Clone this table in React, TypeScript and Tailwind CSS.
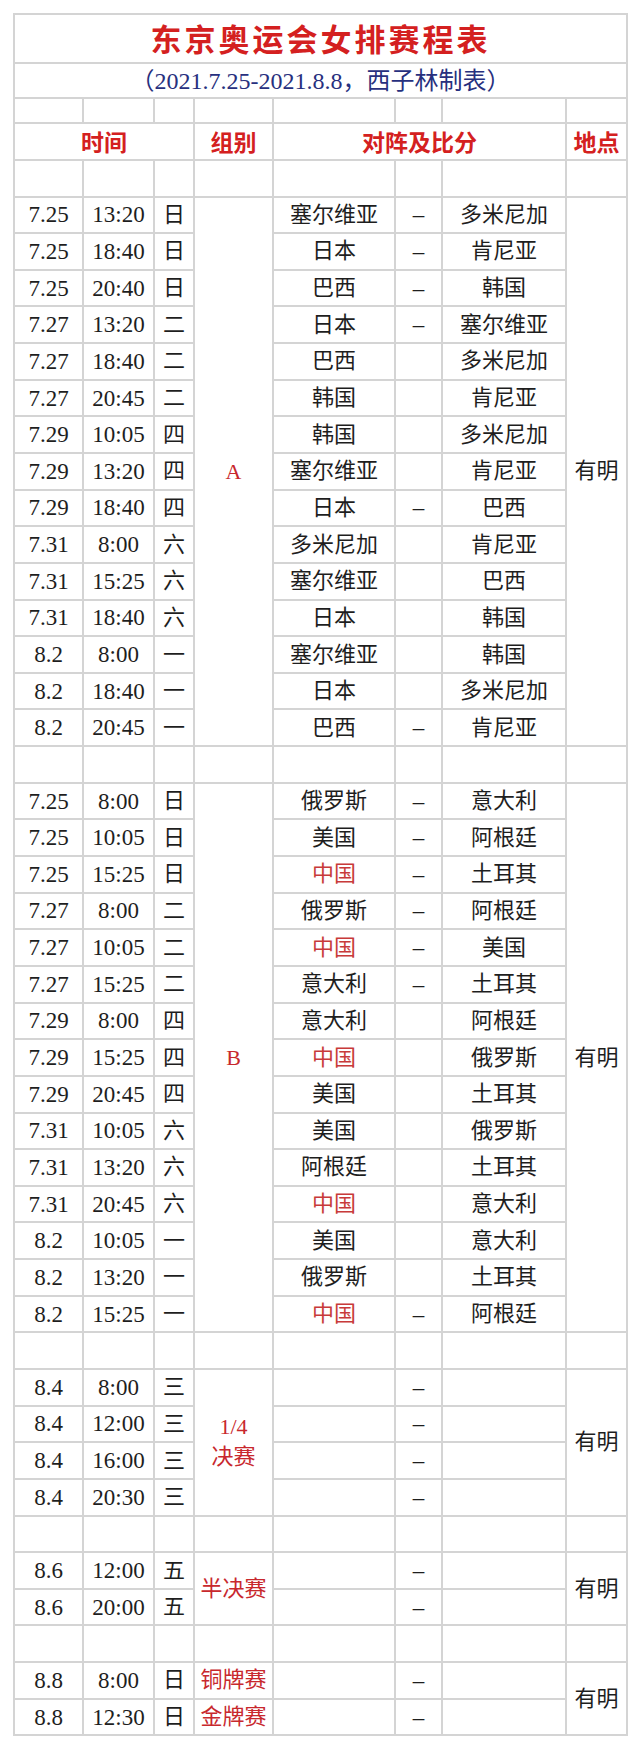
import React from "react";

type Row = { d: string; t: string; w: string; a: string; dash: boolean; b: string };

const rowsA: Row[] = [
  { d: "7.25", t: "13:20", w: "日", a: "塞尔维亚", dash: true, b: "多米尼加" },
  { d: "7.25", t: "18:40", w: "日", a: "日本", dash: true, b: "肯尼亚" },
  { d: "7.25", t: "20:40", w: "日", a: "巴西", dash: true, b: "韩国" },
  { d: "7.27", t: "13:20", w: "二", a: "日本", dash: true, b: "塞尔维亚" },
  { d: "7.27", t: "18:40", w: "二", a: "巴西", dash: false, b: "多米尼加" },
  { d: "7.27", t: "20:45", w: "二", a: "韩国", dash: false, b: "肯尼亚" },
  { d: "7.29", t: "10:05", w: "四", a: "韩国", dash: false, b: "多米尼加" },
  { d: "7.29", t: "13:20", w: "四", a: "塞尔维亚", dash: false, b: "肯尼亚" },
  { d: "7.29", t: "18:40", w: "四", a: "日本", dash: true, b: "巴西" },
  { d: "7.31", t: "8:00", w: "六", a: "多米尼加", dash: false, b: "肯尼亚" },
  { d: "7.31", t: "15:25", w: "六", a: "塞尔维亚", dash: false, b: "巴西" },
  { d: "7.31", t: "18:40", w: "六", a: "日本", dash: false, b: "韩国" },
  { d: "8.2", t: "8:00", w: "一", a: "塞尔维亚", dash: false, b: "韩国" },
  { d: "8.2", t: "18:40", w: "一", a: "日本", dash: false, b: "多米尼加" },
  { d: "8.2", t: "20:45", w: "一", a: "巴西", dash: true, b: "肯尼亚" },
];

const rowsB: Row[] = [
  { d: "7.25", t: "8:00", w: "日", a: "俄罗斯", dash: true, b: "意大利" },
  { d: "7.25", t: "10:05", w: "日", a: "美国", dash: true, b: "阿根廷" },
  { d: "7.25", t: "15:25", w: "日", a: "中国", dash: true, b: "土耳其" },
  { d: "7.27", t: "8:00", w: "二", a: "俄罗斯", dash: true, b: "阿根廷" },
  { d: "7.27", t: "10:05", w: "二", a: "中国", dash: true, b: "美国" },
  { d: "7.27", t: "15:25", w: "二", a: "意大利", dash: true, b: "土耳其" },
  { d: "7.29", t: "8:00", w: "四", a: "意大利", dash: false, b: "阿根廷" },
  { d: "7.29", t: "15:25", w: "四", a: "中国", dash: false, b: "俄罗斯" },
  { d: "7.29", t: "20:45", w: "四", a: "美国", dash: false, b: "土耳其" },
  { d: "7.31", t: "10:05", w: "六", a: "美国", dash: false, b: "俄罗斯" },
  { d: "7.31", t: "13:20", w: "六", a: "阿根廷", dash: false, b: "土耳其" },
  { d: "7.31", t: "20:45", w: "六", a: "中国", dash: false, b: "意大利" },
  { d: "8.2", t: "10:05", w: "一", a: "美国", dash: false, b: "意大利" },
  { d: "8.2", t: "13:20", w: "一", a: "俄罗斯", dash: false, b: "土耳其" },
  { d: "8.2", t: "15:25", w: "一", a: "中国", dash: true, b: "阿根廷" },
];

const td = "border-2 border-[#d4d4d4] text-center align-middle p-0 whitespace-nowrap";
const num = "text-[23px] leading-none";
const zh = "text-[22px] leading-none";
const rowH = "h-[36.65px]";

function EmptyRow({ h }: { h: string }) {
  return (
    <tr className={h}>
      {Array.from({ length: 8 }).map((_, i) => (
        <td key={i} className={td}></td>
      ))}
    </tr>
  );
}

function Team({ name }: { name: string }) {
  return <span className={name === "中国" ? "text-[#c83a3a]" : ""}>{name}</span>;
}

function GroupRows({ rows, group }: { rows: Row[]; group: string }) {
  return (
    <>
      {rows.map((r, i) => (
        <tr key={i} className={rowH}>
          <td className={`${td} ${num}`}>{r.d}</td>
          <td className={`${td} ${num}`}>{r.t}</td>
          <td className={`${td} ${zh}`}>{r.w}</td>
          {i === 0 && (
            <td rowSpan={rows.length} className={`${td} text-[22px] text-[#c8282d]`}>
              {group}
            </td>
          )}
          <td className={`${td} ${zh}`}>
            <Team name={r.a} />
          </td>
          <td className={`${td} ${num}`}>{r.dash ? "–" : ""}</td>
          <td className={`${td} ${zh}`}>{r.b}</td>
          {i === 0 && (
            <td rowSpan={rows.length} className={`${td} ${zh}`}>
              有明
            </td>
          )}
        </tr>
      ))}
    </>
  );
}

type KRow = { d: string; t: string; w: string };

function KnockRows({ rows, label }: { rows: KRow[]; label: React.ReactNode }) {
  return (
    <>
      {rows.map((r, i) => (
        <tr key={i} className={rowH}>
          <td className={`${td} ${num}`}>{r.d}</td>
          <td className={`${td} ${num}`}>{r.t}</td>
          <td className={`${td} ${zh}`}>{r.w}</td>
          {i === 0 && (
            <td rowSpan={rows.length} className={`${td} text-[22px] leading-[30px] text-[#c8282d]`}>
              {label}
            </td>
          )}
          <td className={td}></td>
          <td className={`${td} ${num}`}>–</td>
          <td className={td}></td>
          {i === 0 && (
            <td rowSpan={rows.length} className={`${td} ${zh}`}>
              有明
            </td>
          )}
        </tr>
      ))}
    </>
  );
}

export default function App() {
  return (
    <div className="w-[640px] min-h-[1747px] bg-white pt-[13px] pl-[13px] font-['Liberation_Serif','Noto_Sans_CJK_SC',serif] text-[#1e1e1e]">
      <table className="border-collapse table-fixed w-[613px]">
        <colgroup>
          <col className="w-[69px]" />
          <col className="w-[71px]" />
          <col className="w-[40px]" />
          <col className="w-[79px]" />
          <col className="w-[122px]" />
          <col className="w-[47px]" />
          <col className="w-[124px]" />
          <col className="w-[61px]" />
        </colgroup>
        <tbody>
          <tr className="h-[49px]">
            <td colSpan={8} className={`${td} text-[31px] font-bold tracking-[3px] text-[#d42020] font-['Noto_Sans_CJK_SC',sans-serif]`}>
              东京奥运会女排赛程表
            </td>
          </tr>
          <tr className="h-[35px]">
            <td colSpan={8} className={`${td} text-[24px] leading-none text-[#27307e]`}>
              （2021.7.25-2021.8.8，西子林制表）
            </td>
          </tr>
          <EmptyRow h="h-[25px]" />
          <tr className="h-[36px]">
            <td colSpan={3} className={`${td} text-[23px] font-bold text-[#d42020] font-['Noto_Sans_CJK_SC',sans-serif]`}>
              时间
            </td>
            <td className={`${td} text-[23px] font-bold text-[#d42020] font-['Noto_Sans_CJK_SC',sans-serif]`}>
              组别
            </td>
            <td colSpan={3} className={`${td} text-[23px] font-bold text-[#d42020] font-['Noto_Sans_CJK_SC',sans-serif]`}>
              对阵及比分
            </td>
            <td className={`${td} text-[23px] font-bold text-[#d42020] font-['Noto_Sans_CJK_SC',sans-serif]`}>
              地点
            </td>
          </tr>
          <EmptyRow h="h-[37px]" />
          <GroupRows rows={rowsA} group="A" />
          <EmptyRow h="h-[36.65px]" />
          <GroupRows rows={rowsB} group="B" />
          <EmptyRow h="h-[36.65px]" />
          <KnockRows
            rows={[
              { d: "8.4", t: "8:00", w: "三" },
              { d: "8.4", t: "12:00", w: "三" },
              { d: "8.4", t: "16:00", w: "三" },
              { d: "8.4", t: "20:30", w: "三" },
            ]}
            label={
              <>
                1/4
                <br />
                决赛
              </>
            }
          />
          <EmptyRow h="h-[36.65px]" />
          <KnockRows
            rows={[
              { d: "8.6", t: "12:00", w: "五" },
              { d: "8.6", t: "20:00", w: "五" },
            ]}
            label="半决赛"
          />
          <EmptyRow h="h-[36.65px]" />
          {[
            { d: "8.8", t: "8:00", w: "日", g: "铜牌赛" },
            { d: "8.8", t: "12:30", w: "日", g: "金牌赛" },
          ].map((r, i) => (
            <tr key={i} className={rowH}>
              <td className={`${td} ${num}`}>{r.d}</td>
              <td className={`${td} ${num}`}>{r.t}</td>
              <td className={`${td} ${zh}`}>{r.w}</td>
              <td className={`${td} ${zh} text-[#c8282d]`}>{r.g}</td>
              <td className={td}></td>
              <td className={`${td} ${num}`}>–</td>
              <td className={td}></td>
              {i === 0 && (
                <td rowSpan={2} className={`${td} ${zh}`}>
                  有明
                </td>
              )}
            </tr>
          ))}
        </tbody>
      </table>
    </div>
  );
}
